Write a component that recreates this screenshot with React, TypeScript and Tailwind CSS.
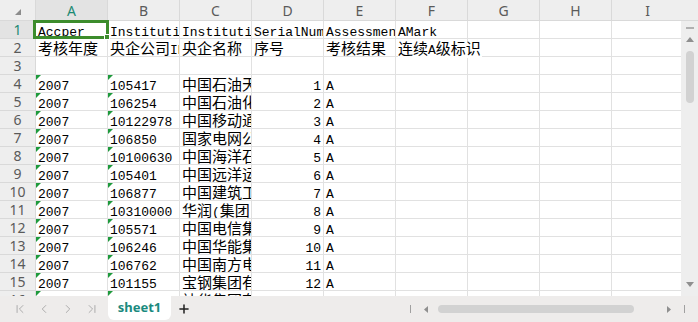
import { ChevronFirst, ChevronLast, ChevronLeft, ChevronRight, Plus } from "lucide-react";

type Cell = { v: string; right?: boolean; tri?: boolean };

const COLS = ["A", "B", "C", "D", "E", "F", "G", "H", "I"];

const companies = [
  ["105417", "中国石油天然气集团公司"],
  ["106254", "中国石油化工集团公司"],
  ["10122978", "中国移动通信集团公司"],
  ["106850", "国家电网公司"],
  ["10100630", "中国海洋石油总公司"],
  ["105401", "中国远洋运输集团总公司"],
  ["106877", "中国建筑工程总公司"],
  ["10310000", "华润(集团)有限公司"],
  ["105571", "中国电信集团公司"],
  ["106246", "中国华能集团公司"],
  ["106762", "中国南方电网有限责任公司"],
  ["101155", "宝钢集团有限公司"],
  ["100187", "神华集团有限责任公司"],
];

const rows: Cell[][] = [
  [{ v: "Accper" }, { v: "InstitutionID" }, { v: "InstitutionName" }, { v: "SerialNum" }, { v: "AssessmentResult" }, { v: "AMark" }],
  [{ v: "考核年度" }, { v: "央企公司ID" }, { v: "央企名称" }, { v: "序号" }, { v: "考核结果" }, { v: "连续A级标识" }],
  [],
  ...companies.map(([id, name], i) => [
    { v: "2007", tri: true },
    { v: id, tri: true },
    { v: name },
    { v: String(i + 1), right: true },
    { v: "A" },
  ]),
];

// CJK glyphs are wider in the reference than the latin mono ones
function Txt({ s }: { s: string }) {
  const parts = s.split(/([\u3000-\u9fff\uff00-\uffef]+)/);
  return (
    <>
      {parts.map((p, i) =>
        /[\u3000-\u9fff]/.test(p) ? (
          <span key={i} className="text-[15px] leading-[12px]">
            {p}
          </span>
        ) : (
          p
        )
      )}
    </>
  );
}

function SheetCell({ cell, r, c }: { cell?: Cell; r: number; c: number }) {
  const spill = r === 1 && c === 5;
  return (
    <div
      className={`relative h-[18px] w-[72px] shrink-0 whitespace-nowrap border-r border-b border-[#e1e1e1] px-[2px] text-[13px] leading-[24px] text-black ${
        spill ? "z-10 overflow-visible" : "overflow-hidden"
      } ${cell?.right ? "text-right" : "text-left"}`}
    >
      {cell?.tri && (
        <div className="absolute left-0 top-0 h-0 w-0 border-t-[5px] border-r-[5px] border-t-[#1e9a3c] border-r-transparent" />
      )}
      {cell && (spill ? (
        <span className="relative bg-white pr-[1px]">
          <Txt s={cell.v} />
        </span>
      ) : (
        <Txt s={cell.v} />
      ))}
    </div>
  );
}

export default function App() {
  const mono = { fontFamily: "'Liberation Mono','Noto Sans CJK SC',monospace" };
  const sans = { fontFamily: "'Noto Sans','Liberation Sans',sans-serif" };
  return (
    <div className="flex h-[322px] w-[698px] flex-col overflow-hidden bg-white">
      <div className="flex h-[296px] shrink-0">
        {/* grid */}
        <div className="relative w-[681px] overflow-hidden" style={mono}>
          {/* column headers */}
          <div className="flex h-[21px] border-b border-[#d9d9d9] bg-[#eeeeee]" style={sans}>
            <div className="relative h-[20px] w-[36px] shrink-0 border-r border-[#d9d9d9]">
              <svg className="absolute left-[15px] top-[9px]" width="6" height="6" viewBox="0 0 6 6">
                <polygon points="6,0 6,6 0,6" fill="#8c8c8c" />
              </svg>
            </div>
            {COLS.map((c, i) => (
              <div
                key={c}
                className={`flex h-[20px] w-[72px] shrink-0 items-center justify-center border-r border-[#d9d9d9] text-[14px] ${
                  i === 0 ? "bg-[#e3e3e3] text-[#1b8a73]" : "text-[#5a5a5a]"
                }`}
              >
                {c}
              </div>
            ))}
          </div>
          {rows.map((row, r) => (
            <div key={r} className="flex">
              <div
                className={`flex h-[18px] w-[36px] shrink-0 items-center justify-center border-r border-b border-[#d9d9d9] text-[14px] ${
                  r === 0 ? "bg-[#e3e3e3] text-[#1b8a73]" : "bg-[#eeeeee] text-[#5a5a5a]"
                }`}
                style={sans}
              >
                {r + 1}
              </div>
              {COLS.map((c, ci) => (
                <SheetCell key={c} cell={row[ci]} r={r} c={ci} />
              ))}
            </div>
          ))}
          {/* active cell A1 */}
          <div className="absolute left-[33px] top-[20px] z-20 h-[19px] w-[76px] border-[3px] border-[#3c8c2c]">
            <div className="absolute -bottom-[4px] -right-[4px] h-[6px] w-[6px] border border-white bg-[#3c8c2c]" />
          </div>
        </div>
        {/* vertical scrollbar */}
        <div className="flex w-[17px] shrink-0 flex-col">
          <div className="h-[21px] border-b border-[#d9d9d9] bg-[#eeeeee]" />
          <div className="flex flex-1 flex-col items-center bg-[#eeeeee] pt-[6px]">
            <div className="h-[2px] w-[8px] bg-[#b0b0b0]" />
            <svg className="mt-[8px]" width="8" height="5" viewBox="0 0 8 5">
              <polygon points="4,0 8,5 0,5" fill="#8f8f8f" />
            </svg>
            <div className="mt-[9px] h-[52px] w-[8px] rounded-full bg-[#d2d2d2]" />
            <div className="flex-1" />
            <svg className="mb-[9px]" width="8" height="5" viewBox="0 0 8 5">
              <polygon points="0,0 8,0 4,5" fill="#8f8f8f" />
            </svg>
          </div>
        </div>
      </div>
      {/* sheet tab bar */}
      <div className="flex h-[26px] items-center bg-[#eeeceb]" style={sans}>
        <div className="flex items-center gap-[10px] pl-[13px] text-[#a8a8a8]">
          <ChevronFirst size={14} strokeWidth={1.6} />
          <ChevronLeft size={14} strokeWidth={1.6} />
          <ChevronRight size={14} strokeWidth={1.6} />
          <ChevronLast size={14} strokeWidth={1.6} />
        </div>
        <div className="ml-[9px] flex h-[24px] w-[63px] items-center justify-center self-start rounded-b-[6px] bg-white text-[13px] font-bold text-[#1b8a7e]">
          sheet1
        </div>
        <Plus className="ml-[6px] text-[#222]" size={14} strokeWidth={2.6} />
        <div className="ml-[219px] h-[8px] w-[1px] bg-[#a0a0a0]" />
        <svg className="ml-[13px]" width="4" height="7" viewBox="0 0 4 7">
          <polygon points="4,0 4,7 0,3.5" fill="#8f8f8f" />
        </svg>
        <div className="ml-[10px] h-[8px] w-[196px] rounded-full bg-[#d2d2d2]" />
        <svg className="ml-[33px]" width="4" height="7" viewBox="0 0 4 7">
          <polygon points="0,0 4,3.5 0,7" fill="#8f8f8f" />
        </svg>
        <div className="ml-[13px] h-[8px] w-[1px] bg-[#a0a0a0]" />
      </div>
    </div>
  );
}
